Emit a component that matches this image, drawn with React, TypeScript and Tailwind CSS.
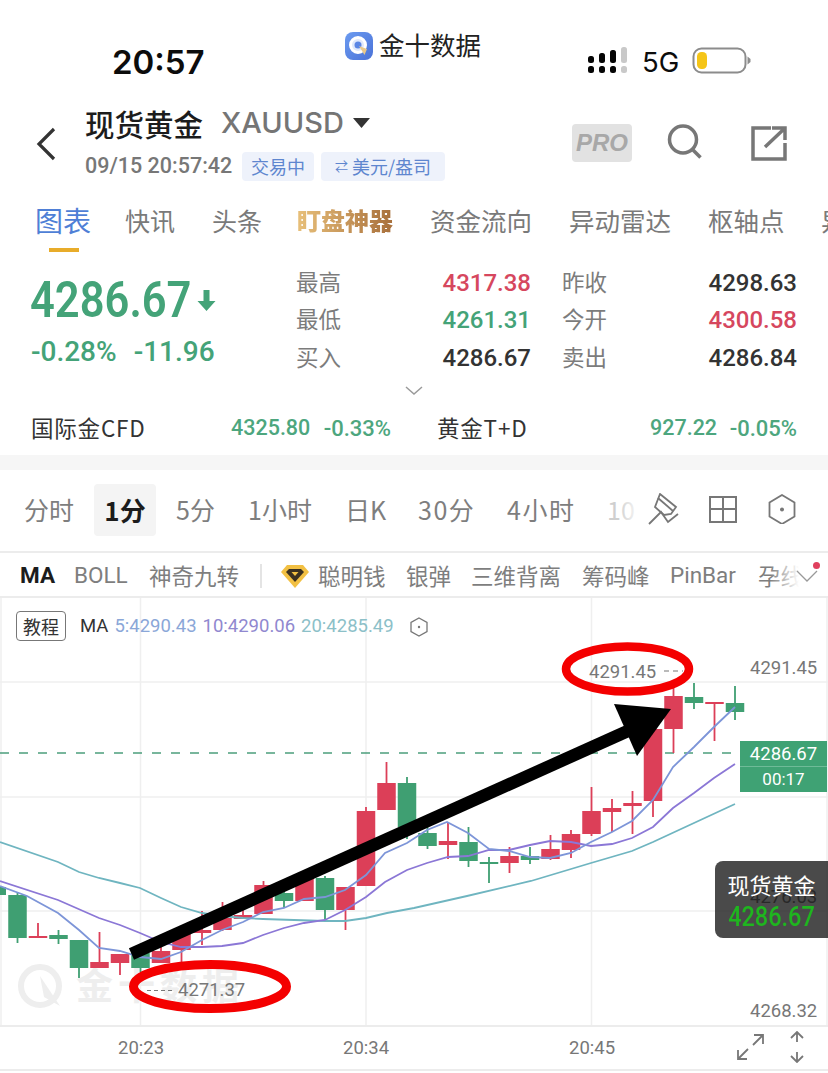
import React from "react";

const CJK = "font-['Noto_Sans_CJK_SC','Noto_Sans',sans-serif]";
const NUM = "font-['Roboto','Noto_Sans_CJK_SC',sans-serif]";

type C = [number, "r" | "g", number, number, number, number];
const candles: C[] = [
  [3, "g", 887, 895, 887, 895],
  [17.5, "g", 895, 938, 892, 943],
  [38, "r", 936, 938, 923, 938],
  [58.5, "g", 935, 939, 930, 944],
  [79, "g", 940, 968, 940, 978],
  [99.5, "r", 962, 968, 932, 968],
  [120, "r", 954, 963, 954, 975],
  [140.5, "g", 953, 968, 953, 972],
  [161, "r", 951, 963, 947, 963],
  [181.5, "r", 934, 950, 934, 962],
  [202, "r", 930, 933, 911, 945],
  [222.5, "r", 918, 930, 902, 931],
  [243, "r", 915, 919, 908, 919],
  [263.5, "r", 885, 914, 881, 914],
  [284, "g", 893, 901, 887, 908],
  [304.5, "r", 878, 901, 874, 901],
  [325, "g", 878, 910, 876, 919],
  [345.5, "r", 887, 910, 887, 930],
  [366, "r", 811, 886, 807, 886],
  [386.5, "r", 783, 810, 762, 810],
  [407, "g", 783, 827, 777, 839],
  [427.5, "g", 833, 846, 815, 849],
  [448, "r", 841, 845, 823, 859],
  [468.5, "g", 842, 861, 827, 867],
  [489, "g", 862, 864, 857, 883],
  [509.5, "r", 856, 863, 847, 873],
  [530, "g", 856, 860, 847, 864],
  [550.5, "r", 849, 859, 835, 860],
  [571, "r", 834, 850, 830, 858],
  [591.5, "r", 811, 834, 787, 836],
  [612, "r", 808, 812, 799, 832],
  [632.5, "r", 803, 806, 791, 834],
  [653, "r", 729, 801, 729, 817],
  [673.5, "r", 696, 729, 688, 753],
  [694, "g", 697, 703, 683, 709],
  [714.5, "r", 702, 703.5, 702, 741],
  [735, "g", 703, 712, 686, 720],
];

const ma5 = "0,886 27,896 58,913 79,930 99,948 120,951 140,957 161,959 181,952 202,940 222,930 243,922 263,912 284,908 304,899 325,897 345,890 366,875 385,853 407,843 427,830 447,822 468,833 489,849 509,851 530,857 550,858 571,853 591,842 612,832 632,821 653,800 673,767 694,747 714,727 735,707";
const ma10 = "0,881 58,900 99,918 120,925 140,933 161,942 181,947 202,947 222,946 243,943 263,935 284,928 304,923 325,920 345,910 366,897 385,882 407,870 427,863 448,857 468,856 489,850 509,850 530,845 550,841 571,842 591,846 612,844 632,838 653,827 673,808 694,793 714,778 735,764";
const ma20 = "0,842 58,862 79,872 99,878 120,883 140,888 161,898 181,907 202,913 222,916 243,918 263,919 325,921 345,921 366,918 387,913 414,908 467,896 531,881 591,863 632,851 653,842 735,804";

function Stat({ label, value, color }: { label: string; value: string; color: string }) {
  return (
    <div className="flex h-[37.5px] items-center justify-between">
      <span className={`${CJK} text-[22.5px] -mt-[2px] text-[#7c7c7c]`}>{label}</span>
      <span className={`${NUM} text-[24px] font-medium ${color}`}>{value}</span>
    </div>
  );
}

function Ticker({ name, value, change, valW }: { name: string; value: string; change: string; valW: string }) {
  return (
    <div className="flex items-center justify-between w-[360px]">
      <span className={`${CJK} text-[22.5px] tracking-[0.8px] text-[#333]`}>{name}</span>
      <span className={`${NUM} text-[21.5px] text-[#4da67e] font-medium flex items-center justify-between ${valW}`}>
        <span>{value}</span>
        <span className="text-[22px]">{change}</span>
      </span>
    </div>
  );
}

export default function App() {
  return (
    <div className={`${CJK} w-[828px] h-[1073px] bg-white overflow-hidden flex flex-col relative`}>
      {/* status bar */}
      <div className="h-[98px] flex shrink-0">
        <div className="w-[345px] pl-[112px] pt-[39px]">
          <span className="font-['Inter',sans-serif] text-[33px] font-semibold leading-[46px] text-[#0c0c0c]">20:57</span>
        </div>
        <div className="w-[242px] flex items-start gap-[6px] pt-[32px]">
          <svg width="28" height="28" viewBox="0 0 28 28">
            <defs>
              <linearGradient id="lg" x1="0" y1="0" x2="1" y2="1">
                <stop offset="0" stopColor="#6b9bf0" />
                <stop offset="1" stopColor="#4a72d8" />
              </linearGradient>
            </defs>
            <rect width="28" height="28" rx="8" fill="url(#lg)" />
            <circle cx="13" cy="13" r="7.5" fill="#dfe8fb" stroke="#fff" strokeWidth="3" />
            <circle cx="13" cy="13" r="3.5" fill="#5b86e4" />
            <path d="M14 14l8 3-2.500 6z" fill="#e9c98a" />
          </svg>
          <span className="text-[25.5px] leading-[28px] -mt-[2px] text-[#222]">金十数据</span>
        </div>
        <div className="flex items-start pt-[46px]">
          <svg width="41" height="30" viewBox="0 0 41 30">
            <g fill="#050505">
              <rect x="1" y="10" width="6" height="7" rx="2.5" />
              <rect x="12" y="7" width="6" height="10" rx="2.5" />
              <rect x="23" y="4" width="6" height="13" rx="2.5" />
              <rect x="1" y="20" width="6" height="7" rx="2.5" />
              <rect x="12" y="20" width="6" height="7" rx="2.5" />
              <rect x="23" y="20" width="6" height="7" rx="2.5" />
            </g>
            <rect x="34" y="1" width="6" height="16" rx="2.5" fill="#c9c9c9" />
            <rect x="34" y="20" width="6" height="7" rx="2.5" fill="#c9c9c9" />
          </svg>
          <span className="font-['Inter',sans-serif] text-[27.5px] leading-[32px] ml-[14px] text-[#0c0c0c]">5G</span>
          <svg className="ml-[13px] mt-[1px]" width="60" height="28" viewBox="0 0 60 28">
            <rect x="1.5" y="1.5" width="52" height="24" rx="8" fill="#fff" stroke="#8c8c8c" strokeWidth="2" />
            <rect x="5" y="5" width="10" height="17" rx="4.5" fill="#f5c518" />
            <path d="M55.5 9.5l3 2.5v3l-3 2.5z" fill="#8c8c8c" />
          </svg>
        </div>
      </div>

      {/* title bar */}
      <div className="h-[95px] flex shrink-0 items-start">
        <div className="w-[85px] pl-[36px] pt-[29px]">
          <svg width="20" height="34" viewBox="0 0 20 34" fill="none" stroke="#333" strokeWidth="3.2">
            <path d="M18 2L3 17l15 15" />
          </svg>
        </div>
        <div className="w-[487px] flex flex-col">
          <div className="flex items-center h-[50px]">
            <span className="text-[29.5px] font-medium text-[#1c1c1c] leading-[50px]">现货黄金</span>
            <span className="font-['Inter',sans-serif] ml-[18px] text-[29px] font-medium text-[#757575] leading-[50px]">XAUUSD</span>
            <svg className="ml-[9px]" width="17" height="10" viewBox="0 0 17 10"><path d="M0 0h17L8.500 10z" fill="#333" /></svg>
          </div>
          <div className="flex items-center h-[30px] mt-[3px]">
            <span className={`${NUM} w-[157px] text-[21.5px] font-medium text-[#777] whitespace-nowrap`}>09/15 20:57:42</span>
            <span className="w-[72px] h-[29px] bg-[#eef2fb] rounded flex items-center justify-center text-[18px] text-[#5e86cf]">交易中</span>
            <span className="ml-[7px] w-[124px] h-[29px] bg-[#eef2fb] rounded flex items-center justify-center gap-[4px] text-[18px] text-[#5e86cf]">
              <span className="text-[13px]">⇄</span>
              <span>美元/盎司</span>
            </span>
          </div>
        </div>
        <div className="mt-[26px] w-[60px] h-[38px] bg-[#e2e2e2] rounded flex items-center justify-center">
          <span className="font-['Liberation_Sans',sans-serif] italic font-bold text-[24px] text-[#a8a8a8]">PRO</span>
        </div>
        <svg className="ml-[35px] mt-[26px]" width="36" height="36" viewBox="0 0 36 36" fill="none" stroke="#777" strokeWidth="3.500">
          <circle cx="16" cy="15.500" r="13.500" />
          <path d="M25.500 25.500L33.500 33.500" />
        </svg>
        <svg className="ml-[48px] mt-[28px]" width="36" height="36" viewBox="0 0 36 36" fill="none" stroke="#777" strokeWidth="3.500">
          <path d="M20 2H2v31h32V17" />
          <path d="M14 21L33 3M21 2h13v12" />
        </svg>
      </div>

      {/* tabs */}
      <div className="h-[72px] shrink-0 relative flex items-start pl-[35px] pt-[8px] whitespace-nowrap overflow-hidden">
        <span className="w-[90px] shrink-0 text-[28px] leading-[38px] text-[#4f7fd6]">图表</span>
        <span className="w-[87px] shrink-0 text-[25px] leading-[38px] text-[#7a7a7a]">快讯</span>
        <span className="w-[85px] shrink-0 text-[25px] leading-[38px] text-[#7a7a7a]">头条</span>
        <span className="w-[133px] shrink-0">
          <span className="text-[24px] leading-[38px] font-black text-transparent bg-clip-text bg-gradient-to-r from-[#e8c07a] to-[#a8703c]">盯盘神器</span>
        </span>
        <span className="w-[139px] shrink-0 text-[25.5px] leading-[38px] text-[#7a7a7a]">资金流向</span>
        <span className="w-[139px] shrink-0 text-[25.5px] leading-[38px] text-[#7a7a7a]">异动雷达</span>
        <span className="w-[113px] shrink-0 text-[25.5px] leading-[38px] text-[#7a7a7a]">枢轴点</span>
        <span className="shrink-0 text-[25px] leading-[38px] text-[#7a7a7a]">异动</span>
        <div className="absolute left-[49px] top-[55px] w-[30px] h-[4px] bg-[#e8ac2a]" />
      </div>

      {/* quote */}
      <div className="h-[120px] shrink-0 flex">
        <div className="w-[266px] ml-[30px] pt-[8px]">
          <div className="flex items-center h-[55px]">
            <div className="w-[167px] shrink-0">
              <span className={`${NUM} inline-block origin-left scale-x-[0.87] text-[50px] font-semibold text-[#44a378] leading-[55px]`}>4286.67</span>
            </div>
            <svg width="19" height="23" viewBox="0 0 19 23" fill="#44a378">
              <path d="M6.500 1h6v11h6L9.500 22 .5 12h6z" />
            </svg>
          </div>
          <div className={`${NUM} flex gap-[17px] mt-[6px] pl-[1px] text-[28px] font-medium text-[#44a378] leading-[36px]`}>
            <span>-0.28%</span>
            <span>-11.96</span>
          </div>
        </div>
        <div className="w-[235px] -mt-[1px]">
          <Stat label="最高" value="4317.38" color="text-[#d6475e]" />
          <Stat label="最低" value="4261.31" color="text-[#44a378]" />
          <Stat label="买入" value="4286.67" color="text-[#333]" />
        </div>
        <div className="w-[235px] ml-[31px] -mt-[1px]">
          <Stat label="昨收" value="4298.63" color="text-[#333]" />
          <Stat label="今开" value="4300.58" color="text-[#d6475e]" />
          <Stat label="卖出" value="4286.84" color="text-[#333]" />
        </div>
      </div>

      {/* more chevron */}
      <div className="h-[25px] shrink-0 flex justify-center">
        <svg width="18" height="12" viewBox="0 0 18 12" fill="none" stroke="#9a9a9a" strokeWidth="1.500">
          <path d="M1 2l8 7 8-7" />
        </svg>
      </div>

      {/* related */}
      <div className="h-[45px] shrink-0 flex px-[31px] pb-[9px] items-center justify-between">
        <Ticker name="国际金CFD" value="4325.80" change="-0.33%" valW="w-[160px]" />
        <Ticker name="黄金T+D" value="927.22" change="-0.05%" valW="w-[147px]" />
      </div>

      {/* gap band */}
      <div className="h-[15px] shrink-0 bg-[#f6f6f6]" />

      {/* periods */}
      <div className="h-[83px] shrink-0 relative flex items-center border-b-2 border-[#ececec] text-[25px] text-[#7e7e7e] whitespace-nowrap pb-[2px]">
        <span className="ml-[24px] w-[70px]">分时</span>
        <span className="w-[62px] h-[52px] bg-[#f4f4f4] rounded flex items-center justify-center font-semibold text-[26px] text-[#1c1c1c]">1分</span>
        <span className="ml-[20px] w-[72px]">5分</span>
        <span className="w-[97px]">1小时</span>
        <span className="w-[73px]">日K</span>
        <span className="w-[89px] tracking-[1.5px]">30分</span>
        <span className="w-[100px] tracking-[1.5px]">4小时</span>
        <span className="text-[#cfcfcf]">10</span>
        <div className="absolute left-[618px] top-0 bottom-0 w-[24px] bg-gradient-to-r from-transparent to-white" />
        <div className="absolute left-[642px] top-[14px] flex items-center bg-white h-[50px] pl-[6px]">
          <svg width="32" height="32" viewBox="0 0 32 32" fill="none" stroke="#777" strokeWidth="1.800">
            <path d="M12 1L28 14L23 21L16 22L7 14Z" />
            <path d="M10 5L25 18" />
            <path d="M1 31L13 19L20 29L30 21" />
          </svg>
          <svg className="ml-[29px]" width="28" height="28" viewBox="0 0 28 28" fill="none" stroke="#777" strokeWidth="2">
            <rect x="1" y="2" width="26" height="25" />
            <path d="M14 2v25M1 14h26" />
          </svg>
          <svg className="ml-[30px]" width="30" height="30" viewBox="0 0 30 30" fill="none" stroke="#777" strokeWidth="1.800">
            <path d="M15 1l12.500 7.500v14L15 30 2.500 22.500v-14z" />
            <circle cx="15" cy="15.500" r="2" fill="#777" stroke="none" />
          </svg>
        </div>
      </div>

      {/* indicators */}
      <div className="h-[45px] shrink-0 relative flex items-center border-b-2 border-[#ececec] text-[22.5px] text-[#7e7e7e] whitespace-nowrap overflow-hidden pl-[20px] pt-[3px]">
        <span className={`${NUM} w-[54px] font-bold text-[#1c1c1c]`}>MA</span>
        <span className={`${NUM} w-[75px]`}>BOLL</span>
        <span className="w-[111px]">神奇九转</span>
        <span className="w-[21px] h-[24px] border-l-2 border-[#e4e4e4]" />
        <svg width="28" height="24" viewBox="0 0 28 24" className="mr-[9px]">
          <path d="M6 1h16l6 7-14 16L0 8z" fill="#f2c043" />
          <path d="M8 5h12l3 3-9 10L5 8z" fill="#3b3020" />
          <path d="M10.500 8h7l-3.500 4z" fill="#f2c043" />
        </svg>
        <span className="w-[88px]">聪明钱</span>
        <span className="w-[65px]">银弹</span>
        <span className="w-[111px]">三维背离</span>
        <span className="w-[88px]">筹码峰</span>
        <span className={`${NUM} w-[88px]`}>PinBar</span>
        <span className="text-[#7e7e7e]">孕线</span>
        <div className="absolute left-[770px] top-0 bottom-0 w-[58px] bg-gradient-to-r from-transparent via-white to-white" />
        <svg className="absolute left-[796px] top-[17px]" width="22" height="13" viewBox="0 0 22 13" fill="none" stroke="#999" strokeWidth="1.300">
          <path d="M1 1l10 10L21 1" />
        </svg>
        <div className="absolute left-[813px] top-[9px] w-[7px] h-[7px] rounded-full bg-[#e0405e]" />
      </div>

      {/* chart */}
      <div className="h-[427px] shrink-0 relative">
        {/* watermark */}
        <span className="absolute left-[76px] top-[363px] text-[37px] tracking-[5px] leading-[46px] font-bold text-[#eeeeee]">金十数据</span>

        <svg className="absolute left-0 top-0" width="828" height="427" viewBox="0 598 828 427">
          <g stroke="#efefef" strokeWidth="1.500">
            <path d="M1 598V1025M827 598V1025" />
            <path d="M0 682H828M0 797H828M0 911H828" />
            <path d="M140.500 598V1025M366 598V1025M591.500 598V1025" />
          </g>
          <circle cx="40" cy="986" r="19" fill="none" stroke="#eeeeee" strokeWidth="6" />
          <path d="M40 976l20 30-16-9z" fill="#eeeeee" />
          <line x1="0" y1="753" x2="740" y2="753" stroke="#4c9f7c" strokeWidth="1.500" strokeDasharray="9 10" />
          {candles.map(([x, c, t, b, wt, wb], i) => {
            const col = c === "r" ? "#dc3f58" : "#3f9f72";
            const bw = x < 5 ? 6 : 18.5;
            return (
              <g key={i}>
                <line x1={x} x2={x} y1={wt} y2={wb} stroke={col} strokeWidth="1.800" />
                <rect x={x - bw / 2} y={t} width={bw} height={Math.max(b - t, 2)} fill={col} />
              </g>
            );
          })}
          <polyline points={ma20} fill="none" stroke="#6fb5c0" strokeWidth="1.800" />
          <polyline points={ma10} fill="none" stroke="#8b77d6" strokeWidth="1.800" />
          <polyline points={ma5} fill="none" stroke="#7d95d8" strokeWidth="1.800" />
          <line x1="131.500" y1="954" x2="630" y2="730" stroke="#000" strokeWidth="12.500" />
          <polygon points="671,709 614,704 637,756" fill="#000" />
          <ellipse cx="627.500" cy="669" rx="61.500" ry="22.500" fill="none" stroke="#f40000" strokeWidth="8.500" />
          <ellipse cx="210" cy="986.500" rx="76.500" ry="22" fill="none" stroke="#f40000" strokeWidth="9" />
          <line x1="664" y1="671" x2="683" y2="671" stroke="#777" strokeWidth="1.200" strokeDasharray="5 4" />
          <line x1="147" y1="990.500" x2="175" y2="990.500" stroke="#777" strokeWidth="1.200" strokeDasharray="4 3" />
        </svg>

        {/* legend */}
        <div className="absolute left-[16px] top-[13px] flex items-center text-[18px]">
          <span className="w-[50px] h-[30px] border border-[#777] rounded flex items-center justify-center text-[#333] bg-white">教程</span>
          <span className={`${NUM} ml-[14px] mt-[2px] text-[#333] text-[18.5px]`}>MA</span>
          <span className={`${NUM} ml-[6px] mt-[2px] text-[#8ba7d8] text-[18.5px]`}>5:4290.43</span>
          <span className={`${NUM} ml-[6px] mt-[2px] text-[#9088cf] text-[18.5px]`}>10:4290.06</span>
          <span className={`${NUM} ml-[6px] mt-[2px] text-[#8cc0c8] text-[18.5px]`}>20:4285.49</span>
          <svg className="ml-[15px] mt-[2px]" width="20" height="20" viewBox="0 0 20 20" fill="none" stroke="#777" strokeWidth="1.300">
            <path d="M10 1l8 4.500v9l-8 4.500-8-4.500v-9z" />
            <circle cx="10" cy="10" r="1.200" fill="#777" stroke="none" />
          </svg>
        </div>

        {/* labels */}
        <span className={`${NUM} absolute left-[589px] top-[61px] text-[18.5px] leading-[26px] text-[#777]`}>4291.45</span>
        <span className={`${NUM} absolute left-[178px] top-[379px] text-[18.5px] leading-[26px] text-[#777]`}>4271.37</span>
        <span className={`${NUM} absolute left-[750px] top-[57px] text-[18.5px] leading-[26px] text-[#777]`}>4291.45</span>
        <span className={`${NUM} absolute left-[750px] top-[400px] text-[18.5px] leading-[26px] text-[#777]`}>4268.32</span>
        <div className={`${NUM} absolute left-[740px] top-[143px] w-[87px] h-[51px] bg-[#3fa274] text-white flex flex-col items-center`}>
          <span className="h-[26px] leading-[26px] text-[18.5px] border-b border-[#6fbb98] w-full text-center">4286.67</span>
          <span className="h-[25px] leading-[25px] text-[17px]">00:17</span>
        </div>
        <span className={`${NUM} absolute left-[750px] top-[286px] text-[18.5px] leading-[26px] text-[#555]`}>4276.03</span>
        <div className="absolute left-[715px] top-[263px] w-[113px] h-[77px] bg-[#1d1d1d]/80 rounded-l-lg flex flex-col items-center pt-[8px]">
          <span className="text-[22px] leading-[30px] text-white">现货黄金</span>
          <span className={`${NUM} inline-block scale-y-[1.2] text-[23.5px] leading-[34px] font-medium text-[#1fb51f]`}>4286.67</span>
        </div>
      </div>

      {/* time axis */}
      <div className={`${NUM} h-[46px] shrink-0 relative border-t-2 border-b-2 border-[#ececec] text-[18.5px] leading-[30px] text-[#777]`}>
        <span className="absolute left-[118px] top-[6px]">20:23</span>
        <span className="absolute left-[343px] top-[6px]">20:34</span>
        <span className="absolute left-[569px] top-[6px]">20:45</span>
        <svg className="absolute left-[737px] top-[7px]" width="27" height="27" viewBox="0 0 27 27" fill="none" stroke="#777" strokeWidth="1.800">
          <path d="M16 11L26 1M17 1h9v9M11 15L1 25M1 16v9h9" />
        </svg>
        <svg className="absolute left-[788px] top-[4px]" width="18" height="32" viewBox="0 0 18 32" fill="none" stroke="#777" strokeWidth="1.800">
          <path d="M9 1v10M3 7l6-6 6 6M9 21v10M3 25l6 6 6-6" />
        </svg>
      </div>
    </div>
  );
}
